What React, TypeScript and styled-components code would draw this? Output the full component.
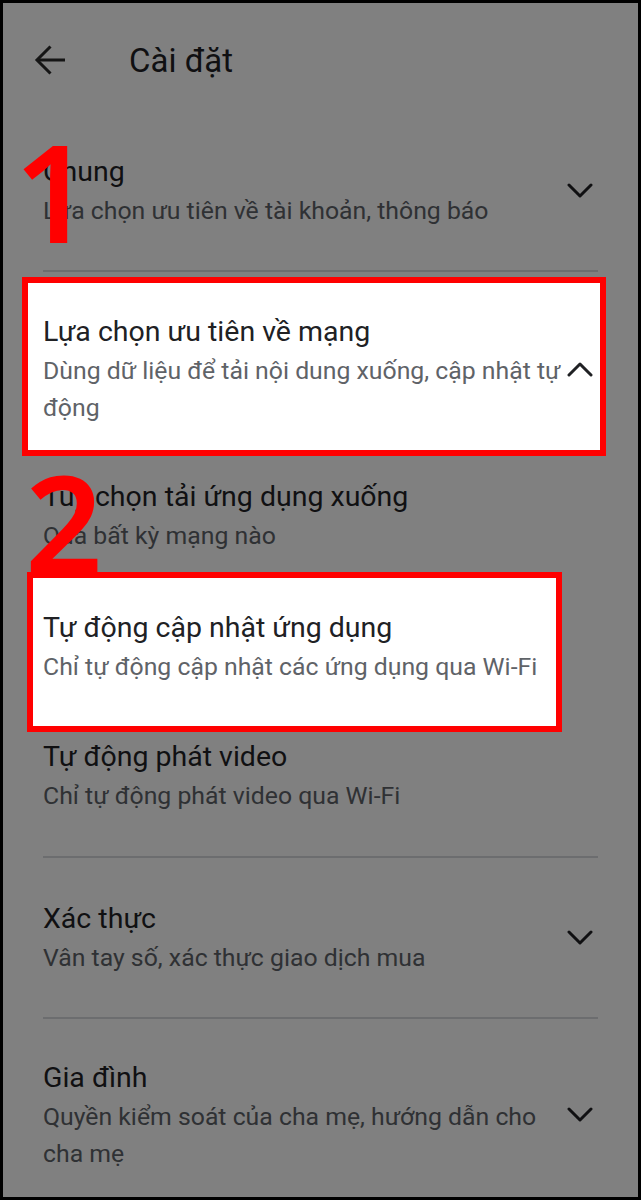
import React from "react";
import styled, { createGlobalStyle, css } from "styled-components";

const Global = createGlobalStyle`
  html, body { margin: 0; padding: 0; background: #000; }
  body { font-family: Roboto, "Noto Sans", Arial, sans-serif; }
  * { box-sizing: border-box; }
`;

const Frame = styled.div`
  position: relative;
  width: 641px;
  height: 1200px;
  overflow: hidden;
  background: #808080;
  border: 3px solid #000;
  display: flex;
  flex-direction: column;
`;

const Header = styled.header`
  height: 114px;
  display: flex;
  align-items: center;
  padding-left: 29px;
`;

const BackButton = styled.button`
  width: 36px;
  height: 36px;
  border: 0;
  padding: 0;
  background: transparent;
  display: flex;
  align-items: center;
  justify-content: center;
  margin-right: 61px;
`;

const HeaderTitle = styled.h1`
  margin: 0;
  font-family: Roboto, sans-serif;
  font-weight: 400;
  font-size: 33px;
  color: #101012;
`;

const Group = styled.section<{ $pt?: number; $pb?: number }>`
  display: flex;
  flex-direction: column;
  padding-top: ${(p) => p.$pt ?? 0}px;
  padding-bottom: ${(p) => p.$pb ?? 0}px;
`;

const Divider = styled.hr`
  margin: 0 40px;
  border: 0;
  height: 2px;
  background: #6c6d6f;
`;

type RowProps = {
  $pt: number;
  $pb: number;
  $lit?: boolean;
  $ml?: number;
  $mr?: number;
  $mt?: number;
  $padR?: number;
};

const Row = styled.div<RowProps>`
  display: flex;
  align-items: center;
  padding: ${(p) => p.$pt}px 40px ${(p) => p.$pb}px 40px;
  ${(p) =>
    p.$lit &&
    css`
      background: #fff;
      border: 6px solid #ff0000;
      margin: ${p.$mt ?? 0}px ${p.$mr ?? 0}px 0 ${p.$ml ?? 0}px;
      padding-left: ${40 - (p.$ml ?? 0) - 6}px;
      padding-right: ${p.$padR ?? 0}px;
    `}
`;

const Texts = styled.div`
  flex: 1;
  min-width: 0;
  display: flex;
  flex-direction: column;
`;

const Title = styled.div<{ $lit?: boolean }>`
  font-size: 28.5px;
  line-height: 40px;
  color: ${(p) => (p.$lit ? "#202124" : "#101012")};
  white-space: nowrap;
`;

const Sub = styled.div<{ $lit?: boolean }>`
  font-size: 24.8px;
  line-height: 37px;
  color: ${(p) => (p.$lit ? "#5f6368" : "#2f3134")};
  white-space: nowrap;
`;

const ChevronBox = styled.div`
  width: 36px;
  flex: 0 0 36px;
  display: flex;
  align-items: center;
  justify-content: center;
`;

const Marker = styled.div<{ $top: number; $left: number }>`
  position: absolute;
  top: ${(p) => p.$top}px;
  left: ${(p) => p.$left}px;
  font-family: "Noto Sans", "Open Sans", sans-serif;
  font-weight: 600;
  font-size: 136px;
  line-height: 1;
  color: #ff0000;
  pointer-events: none;
`;

const Chevron = ({ up, color }: { up?: boolean; color: string }) => (
  <svg width="26" height="16" viewBox="0 0 26 16">
    <polyline
      points={up ? "2,14 13,3 24,14" : "2,2 13,13 24,2"}
      fill="none"
      stroke={color}
      strokeWidth="3"
      strokeLinecap="round"
      strokeLinejoin="round"
    />
  </svg>
);

const BackArrow = () => (
  <svg width="32" height="32" viewBox="0 0 32 32">
    <g fill="none" stroke="#151515" strokeWidth="3" strokeLinecap="butt" strokeLinejoin="miter">
      <line x1="3" y1="16" x2="31" y2="16" />
      <polyline points="16.5,2.5 3,16 16.5,29.5" />
    </g>
  </svg>
);

type Item = {
  title: string;
  sub: React.ReactNode;
};

const ItemText = ({ title, sub, lit }: Item & { lit?: boolean }) => (
  <Texts>
    <Title $lit={lit}>{title}</Title>
    <Sub $lit={lit}>{sub}</Sub>
  </Texts>
);

export default function App() {
  return (
    <>
      <Global />
      <Frame>
        <Header>
          <BackButton aria-label="Quay lại">
            <BackArrow />
          </BackButton>
          <HeaderTitle>Cài đặt</HeaderTitle>
        </Header>

        <Group $pt={35} $pb={41}>
          <Row $pt={0} $pb={0}>
            <ItemText title="Chung" sub="Lựa chọn ưu tiên về tài khoản, thông báo" />
            <ChevronBox>
              <Chevron color="#101012" />
            </ChevronBox>
          </Row>
        </Group>
        <Divider />

        <Group $pb={42}>
          <Row $lit $pt={29} $pb={24} $mt={5} $ml={19} $mr={32} $padR={2}>
            <ItemText
              lit
              title="Lựa chọn ưu tiên về mạng"
              sub={
                <>
                  Dùng dữ liệu để tải nội dung xuống, cập nhật tự
                  <br />
                  động
                </>
              }
            />
            <ChevronBox>
              <Chevron up color="#202124" />
            </ChevronBox>
          </Row>
          <Row $pt={21} $pb={18}>
            <ItemText title="Tùy chọn tải ứng dụng xuống" sub="Qua bất kỳ mạng nào" />
          </Row>
          <Row $lit $pt={30} $pb={41} $ml={24} $mr={76} $padR={0}>
            <ItemText
              lit
              title="Tự động cập nhật ứng dụng"
              sub="Chỉ tự động cập nhật các ứng dụng qua Wi-Fi"
            />
          </Row>
          <Row $pt={5} $pb={0}>
            <ItemText title="Tự động phát video" sub="Chỉ tự động phát video qua Wi-Fi" />
          </Row>
        </Group>
        <Divider />

        <Group $pt={41} $pb={41}>
          <Row $pt={0} $pb={0}>
            <ItemText title="Xác thực" sub="Vân tay số, xác thực giao dịch mua" />
            <ChevronBox>
              <Chevron color="#101012" />
            </ChevronBox>
          </Row>
        </Group>
        <Divider />

        <Group $pt={39}>
          <Row $pt={0} $pb={0}>
            <ItemText
              title="Gia đình"
              sub={
                <>
                  Quyền kiểm soát của cha mẹ, hướng dẫn cho
                  <br />
                  cha mẹ
                </>
              }
            />
            <ChevronBox>
              <Chevron color="#101012" />
            </ChevronBox>
          </Row>
        </Group>

        <Marker $top={120} $left={11}>
          1
        </Marker>
        <Marker $top={451} $left={22}>
          2
        </Marker>
      </Frame>
    </>
  );
}
